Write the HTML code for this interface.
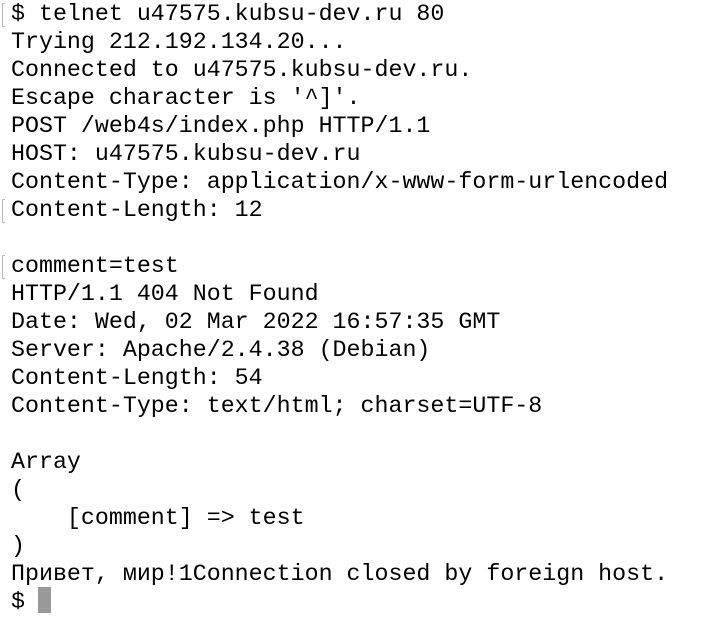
<!DOCTYPE html>
<html><head><meta charset="utf-8"><style>
html,body{margin:0;padding:0;background:#fff;width:702px;height:642px;overflow:hidden}
.t{position:absolute;left:11px;top:0;font-family:"Liberation Mono","DejaVu Sans Mono",monospace;font-size:23.3px;line-height:28px;color:#000;white-space:pre}
.l{height:28px}
.m{position:absolute;left:2px;width:3px;height:24px;border:1.5px solid #bbb;border-right:none;box-sizing:border-box}
.c{position:absolute;left:38px;top:587px;width:13px;height:26px;background:#999}
</style></head><body>
<div class="m" style="top:3px"></div>
<div class="m" style="top:199px"></div>
<div class="m" style="top:255px"></div>
<div class="t"><div class="l">$ telnet u47575.kubsu-dev.ru 80</div><div class="l">Trying 212.192.134.20...</div><div class="l">Connected to u47575.kubsu-dev.ru.</div><div class="l">Escape character is '^]'.</div><div class="l">POST /web4s/index.php HTTP/1.1</div><div class="l">HOST: u47575.kubsu-dev.ru</div><div class="l">Content-Type: application/x-www-form-urlencoded</div><div class="l">Content-Length: 12</div><div class="l"> </div><div class="l">comment=test</div><div class="l">HTTP/1.1 404 Not Found</div><div class="l">Date: Wed, 02 Mar 2022 16:57:35 GMT</div><div class="l">Server: Apache/2.4.38 (Debian)</div><div class="l">Content-Length: 54</div><div class="l">Content-Type: text/html; charset=UTF-8</div><div class="l"> </div><div class="l">Array</div><div class="l">(</div><div class="l">    [comment] =&gt; test</div><div class="l">)</div><div class="l">Привет, мир!1Connection closed by foreign host.</div><div class="l">$</div></div>
<div class="c"></div>
</body></html>
